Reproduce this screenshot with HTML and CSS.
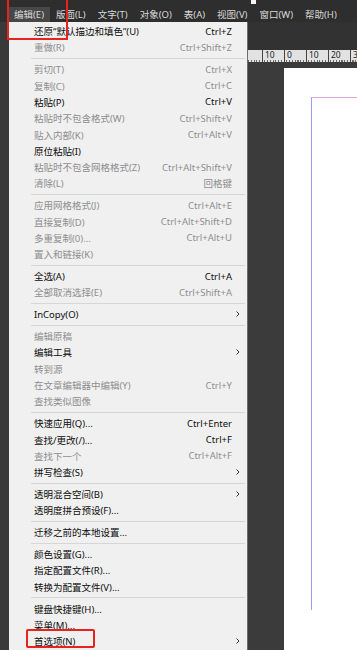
FILE: index.html
```html
<!DOCTYPE html>
<html lang="zh-CN">
<head>
    <meta charset="UTF-8">
    <title>编辑菜单</title>
    <link rel="stylesheet" href="styles.css">
</head>
<body>
    <div class="menubar">
        <span class="top-item active">编辑(E)</span>
        <span class="top-item">版面(L)</span>
        <span class="top-item">文字(T)</span>
        <span class="top-item">对象(O)</span>
        <span class="top-item">表(A)</span>
        <span class="top-item">视图(V)</span>
        <span class="top-item">窗口(W)</span>
        <span class="top-item">帮助(H)</span>
    </div>

    <div class="main">
        <div class="side"></div>

        <div class="menu">
            <div class="item"><span class="label">还原“默认描边和填色”(U)</span><span class="key">Ctrl+Z</span></div>
            <div class="item off"><span class="label">重做(R)</span><span class="key">Ctrl+Shift+Z</span></div>
            <div class="sep"></div>
            <div class="item off"><span class="label">剪切(T)</span><span class="key">Ctrl+X</span></div>
            <div class="item off"><span class="label">复制(C)</span><span class="key">Ctrl+C</span></div>
            <div class="item"><span class="label">粘贴(P)</span><span class="key">Ctrl+V</span></div>
            <div class="item off"><span class="label">粘贴时不包含格式(W)</span><span class="key">Ctrl+Shift+V</span></div>
            <div class="item off"><span class="label">贴入内部(K)</span><span class="key">Ctrl+Alt+V</span></div>
            <div class="item"><span class="label">原位粘贴(I)</span></div>
            <div class="item off"><span class="label">粘贴时不包含网格格式(Z)</span><span class="key">Ctrl+Alt+Shift+V</span></div>
            <div class="item off"><span class="label">清除(L)</span><span class="key">回格键</span></div>
            <div class="sep"></div>
            <div class="item off"><span class="label">应用网格格式(J)</span><span class="key">Ctrl+Alt+E</span></div>
            <div class="item off"><span class="label">直接复制(D)</span><span class="key">Ctrl+Alt+Shift+D</span></div>
            <div class="item off"><span class="label">多重复制(0)...</span><span class="key">Ctrl+Alt+U</span></div>
            <div class="item off"><span class="label">置入和链接(K)</span></div>
            <div class="sep"></div>
            <div class="item"><span class="label">全选(A)</span><span class="key">Ctrl+A</span></div>
            <div class="item off"><span class="label">全部取消选择(E)</span><span class="key">Ctrl+Shift+A</span></div>
            <div class="sep"></div>
            <div class="item"><span class="label">InCopy(O)</span><span class="sub"><svg width="4" height="6" viewBox="0 0 4 6"><path d="M0.5 0.5 L3 3 L0.5 5.5" fill="none" stroke="#333" stroke-width="1"/></svg></span></div>
            <div class="sep"></div>
            <div class="item off"><span class="label">编辑原稿</span></div>
            <div class="item"><span class="label">编辑工具</span><span class="sub"><svg width="4" height="6" viewBox="0 0 4 6"><path d="M0.5 0.5 L3 3 L0.5 5.5" fill="none" stroke="#333" stroke-width="1"/></svg></span></div>
            <div class="item off"><span class="label">转到源</span></div>
            <div class="item off"><span class="label">在文章编辑器中编辑(Y)</span><span class="key">Ctrl+Y</span></div>
            <div class="item off"><span class="label">查找类似图像</span></div>
            <div class="sep"></div>
            <div class="item"><span class="label">快速应用(Q)...</span><span class="key">Ctrl+Enter</span></div>
            <div class="item"><span class="label">查找/更改(/)...</span><span class="key">Ctrl+F</span></div>
            <div class="item off"><span class="label">查找下一个</span><span class="key">Ctrl+Alt+F</span></div>
            <div class="item"><span class="label">拼写检查(S)</span><span class="sub"><svg width="4" height="6" viewBox="0 0 4 6"><path d="M0.5 0.5 L3 3 L0.5 5.5" fill="none" stroke="#333" stroke-width="1"/></svg></span></div>
            <div class="sep"></div>
            <div class="item"><span class="label">透明混合空间(B)</span><span class="sub"><svg width="4" height="6" viewBox="0 0 4 6"><path d="M0.5 0.5 L3 3 L0.5 5.5" fill="none" stroke="#333" stroke-width="1"/></svg></span></div>
            <div class="item"><span class="label">透明度拼合预设(F)...</span></div>
            <div class="sep"></div>
            <div class="item"><span class="label">迁移之前的本地设置...</span></div>
            <div class="sep"></div>
            <div class="item"><span class="label">颜色设置(G)...</span></div>
            <div class="item"><span class="label">指定配置文件(R)...</span></div>
            <div class="item"><span class="label">转换为配置文件(V)...</span></div>
            <div class="sep"></div>
            <div class="item"><span class="label">键盘快捷键(H)...</span></div>
            <div class="item"><span class="label">菜单(M)...</span></div>
            <div class="item"><span class="label">首选项(N)</span><span class="sub"><svg width="4" height="6" viewBox="0 0 4 6"><path d="M0.5 0.5 L3 3 L0.5 5.5" fill="none" stroke="#333" stroke-width="1"/></svg></span></div>
        </div>

        <div class="workspace">
            <div class="panel"></div>
            <div class="ruler">
                <span class="mark first"></span>
                <span class="mark">10</span>
                <span class="mark">0</span>
                <span class="mark">10</span>
                <span class="mark">20</span>
                <span class="mark last">3</span>
            </div>
            <div class="canvas">
                <div class="page">
                    <div class="margins"></div>
                </div>
            </div>
        </div>
    </div>

    <!-- annotation frames drawn over the screenshot -->
    <div class="frame frame-menu"></div>
    <div class="frame frame-prefs"></div>
</body>
</html>
```

FILE: styles.css
```css
:root {
    --bar: #2e2e2e;
    --dark: #3b3b3b;
    --menu-bg: #f0f0f0;
    --text: #0d0d0d;
    --muted: #8e8e8e;
    --line: #d6d6d6;
    --red: #e8221c;
}

* {
    box-sizing: border-box;
}

body {
    margin: 0;
    width: 357px;
    height: 650px;
    overflow: hidden;
    position: relative;
    background: var(--dark);
    font-family: "Noto Sans", "Noto Sans CJK SC", sans-serif;
    font-size: 9.5px;
    color: var(--text);
}

.menubar {
    height: 22px;
    background: var(--bar);
    display: flex;
    align-items: flex-end;
    padding-left: 8px;
    color: #d9d9d9;
    position: relative;
}

.menubar::after {
    content: "";
    position: absolute;
    left: 251px;
    top: 0;
    width: 5px;
    height: 4px;
    background: #f4f4f4;
}

.top-item {
    height: 15px;
    line-height: 15px;
    padding: 0 6px;
    white-space: nowrap;
}

.top-item.active {
    background: #474747;
}

.main {
    display: flex;
    height: 628px;
}

.side {
    flex: none;
    width: 9px;
    background: #393939;
}

.menu {
    flex: none;
    width: 239px;
    background: var(--menu-bg);
    border-right: 1px solid #6c6c6c;
    padding-top: 1px;
}

.item {
    display: flex;
    align-items: center;
    height: 16.3px;
    padding-left: 25px;
    white-space: nowrap;
}

.item.off {
    color: var(--muted);
}

.label {
    flex: 1;
}

.key {
    padding-right: 15px;
}

.sub {
    width: 15px;
    display: flex;
    align-items: center;
    padding-left: 4px;
}

.sep {
    height: 1px;
    margin: 2.3px 2px 2.3px 22px;
    background: var(--line);
}

.workspace {
    flex: 1;
    min-width: 0;
    display: flex;
    flex-direction: column;
    background: var(--dark);
}

.panel {
    height: 28px;
    background: #323232;
}

.ruler {
    height: 12px;
    display: flex;
    overflow: hidden;
    background-color: #e2e2e2;
    background-image: repeating-linear-gradient(90deg, #6a6a6a 0 1px, transparent 1px 2.75px);
    background-size: 100% 2px;
    background-position: 0 100%;
    background-repeat: no-repeat;
    font-size: 8.5px;
    line-height: 10px;
    color: #222;
}

.mark {
    flex: none;
    width: 22px;
    padding-left: 2px;
    border-left: 1px solid #444;
}

.mark.first {
    width: 14px;
    border-left: none;
}

.mark.last {
    width: 8px;
}

.canvas {
    flex: 1;
    padding: 6px 0 0 36px;
}

.page {
    height: 100%;
    background: #fff;
    padding: 29px 0 0 27px;
}

.margins {
    height: 513px;
    border-left: 1px solid #9c9cff;
    border-top: 1px solid #d9a6d9;
}

.frame {
    position: absolute;
    border: 2px solid var(--red);
}

.frame-menu {
    left: 7px;
    top: -4px;
    width: 61px;
    height: 44px;
}

.frame-prefs {
    left: 26px;
    top: 629px;
    width: 69px;
    height: 19px;
    border-radius: 2px;
}
```
